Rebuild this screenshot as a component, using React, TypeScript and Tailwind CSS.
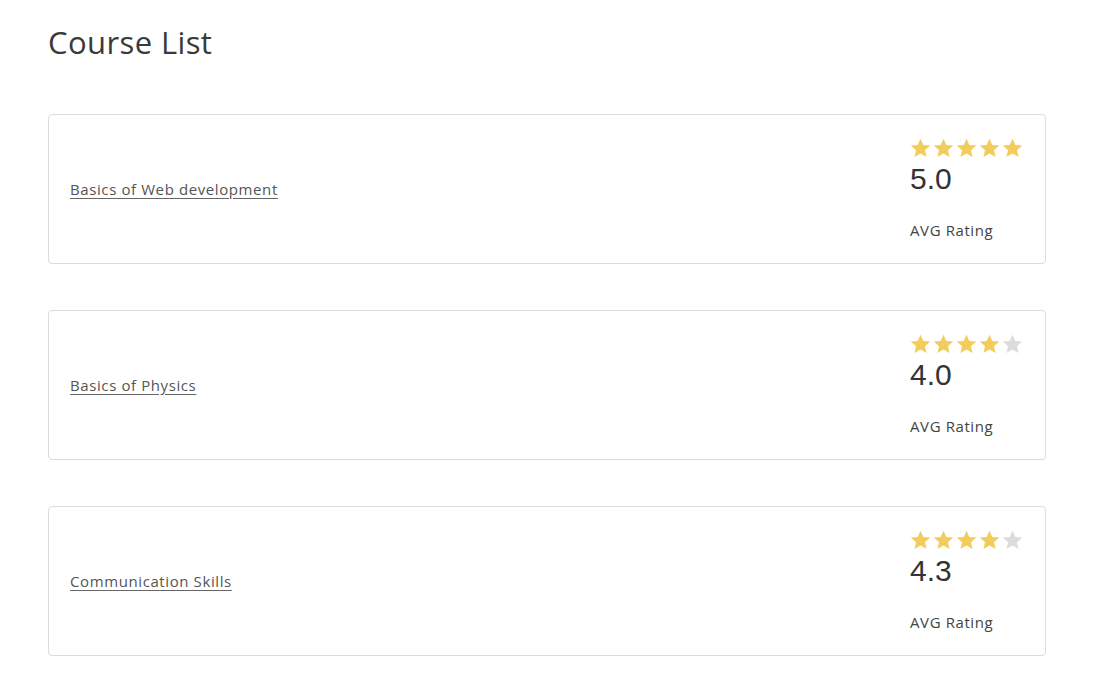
import React from "react";

const courses = [
  { name: "Basics of Web development", rating: "5.0", stars: 5 },
  { name: "Basics of Physics", rating: "4.0", stars: 4 },
  { name: "Communication Skills", rating: "4.3", stars: 4 },
];

function Star({ filled }: { filled: boolean }) {
  return (
    <svg width="23" height="22" viewBox="0 0 24 24" className="shrink-0">
      <path
        d="M12 1.8l3.1 6.9 7.5.7-5.7 5 1.7 7.4L12 17.9l-6.6 3.9 1.7-7.4-5.7-5 7.5-.7z"
        fill={filled ? "#f2cd5c" : "#dcdcdc"}
      />
    </svg>
  );
}

export default function App() {
  return (
    <div className="min-h-[693px] bg-white px-[48px] pt-[22px] text-[#333]" style={{ fontFamily: "'Open Sans', 'Noto Sans', sans-serif" }}>
      <h1 className="text-[31px] font-normal leading-[40px] text-[#3a3a3a] tracking-[0.4px]">Course List</h1>
      <div className="mt-[52px] flex w-[998px] flex-col gap-[46px]">
        {courses.map((c) => (
          <div key={c.name} className="flex h-[150px] items-center justify-between rounded-[4px] border border-[#dcdcdc] pl-[21px] pr-[21px]">
            <a href="#" className="text-[15px] tracking-[0.6px] text-[#555] underline underline-offset-[3px] decoration-[#666]">
              {c.name}
            </a>
            <div className="flex w-[114px] flex-col self-stretch pt-[22px]">
              <div className="flex gap-0 -ml-[1px]">
                {[0, 1, 2, 3, 4].map((i) => (
                  <Star key={i} filled={i < c.stars} />
                ))}
              </div>
              <div className="mt-[2px] text-[30px] leading-[36px] text-[#333]" style={{ fontFamily: "'Liberation Sans', Arial, sans-serif" }}>
                {c.rating}
              </div>
              <div className="mt-[22px] text-[15px] tracking-[0.6px] text-[#444]">AVG Rating</div>
            </div>
          </div>
        ))}
      </div>
    </div>
  );
}
